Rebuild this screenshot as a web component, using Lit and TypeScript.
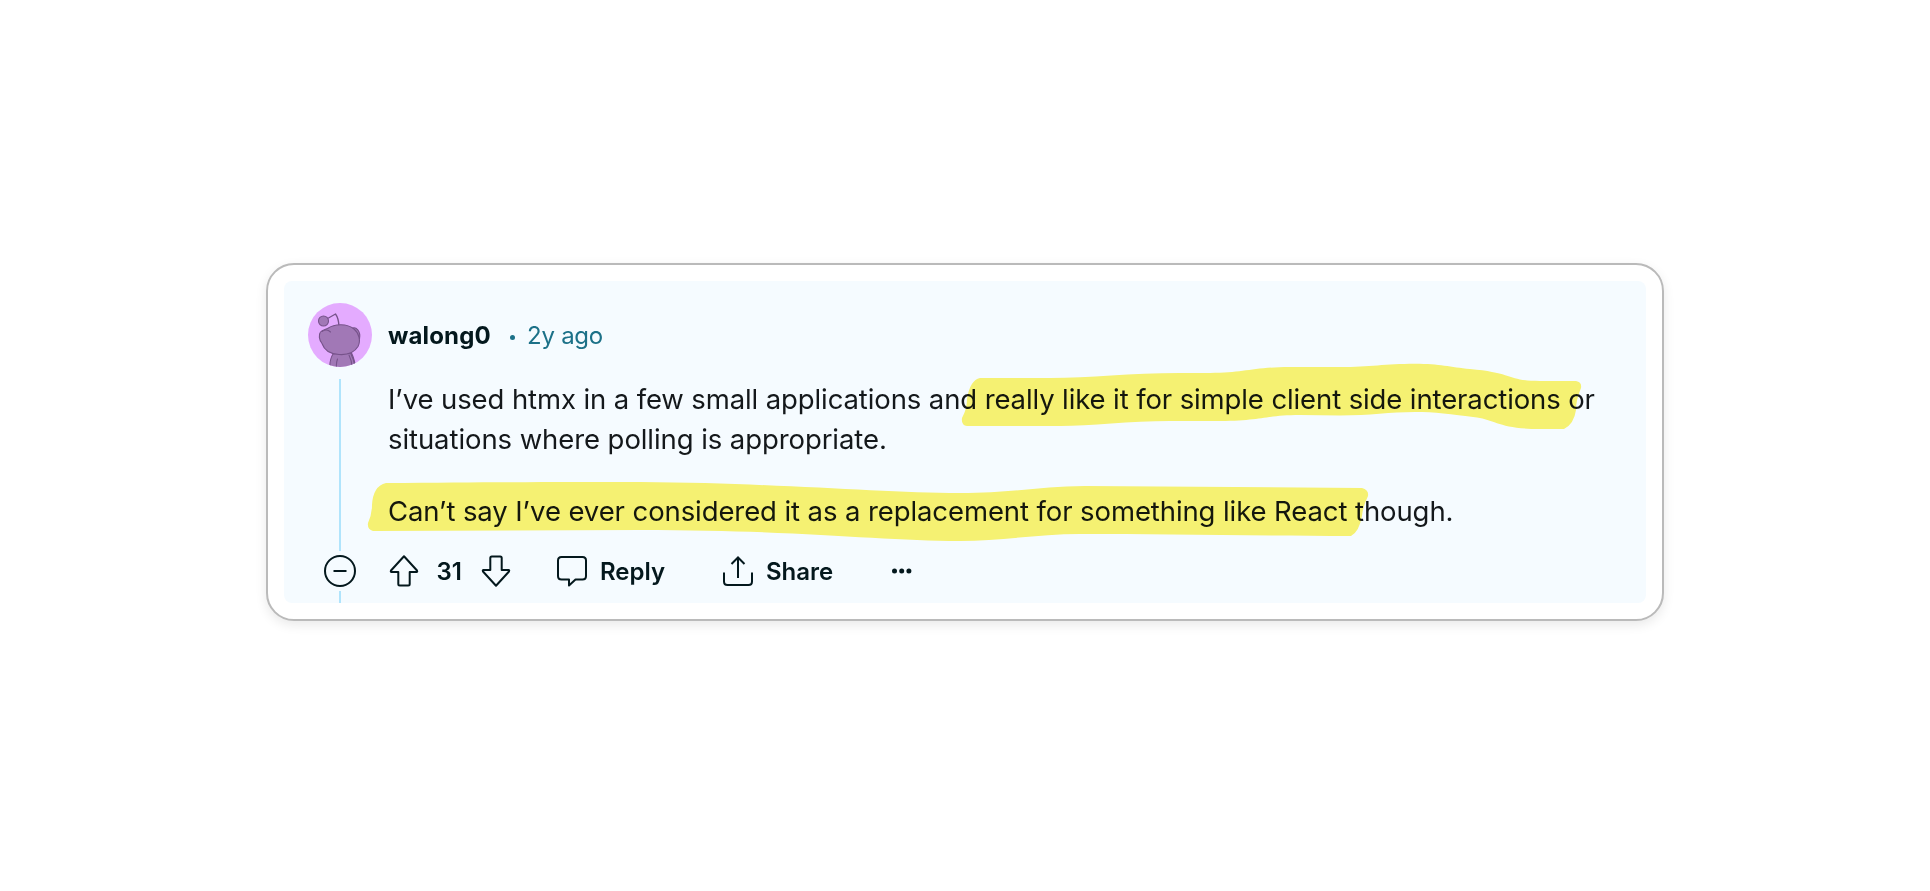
import { LitElement, html, css } from "lit";
import { customElement } from "lit/decorators.js";

@customElement("app-root")
export class AppRoot extends LitElement {
  static styles = css`
    :host {
      display: flex;
      justify-content: center;
      box-sizing: border-box;
      width: 100%;
      height: 891px;
      padding-top: 263px;
      background: #fff;
      font-family: Inter, "Liberation Sans", sans-serif;
      overflow: hidden;
    }
    svg { display: block; flex: none; }
    .card {
      box-sizing: border-box;
      width: 1398px;
      height: 358px;
      border: 2px solid #bababa;
      border-radius: 28px;
      padding: 16px;
      background: #fff;
      box-shadow: 0 4px 12px rgba(0, 0, 0, 0.09);
    }
    .comment {
      position: relative;
      box-sizing: border-box;
      height: 322px;
      border-radius: 8px;
      background: #f5fbff;
      padding: 22px 24px 0;
      display: grid;
      grid-template-columns: 64px 1fr;
      grid-template-rows: 64px 184px 40px 12px;
      column-gap: 16px;
    }
    .meta { display: flex; align-items: center; padding-top: 2px; font-size: 24px; line-height: 32px; white-space: pre; }
    .name { font-weight: 700; color: #04181d; width: 119px; letter-spacing: 0.15px; }
    .dot { width: 5px; height: 5px; border-radius: 50%; background: #1c7188; margin: 2px 12px 0 3px; }
    .age { color: #1c7188; letter-spacing: -0.25px; }
    .line { justify-self: center; width: 2px; background: #b0e4fc; }
    .long { margin: 12px 0 0; }
    .body { padding-top: 12px; font-size: 27.5px; line-height: 40px; color: #14181b; white-space: nowrap; }
    .body p { margin: 0 0 32px; }
    .body span { display: block; }
    .fold { display: flex; align-items: center; justify-content: center; }
    .actions { display: flex; align-items: center; font-size: 24px; line-height: 30px; font-weight: 600; color: #04181d; }
    .actions span { box-sizing: border-box; padding-top: 2px; }
    .count { width: 62px; padding-left: 17.5px; }
    .reply { width: 136px; padding-left: 13px; }
    .share { width: 138px; padding-left: 13px; }
    .marker { position: absolute; left: 0; top: 0; mix-blend-mode: multiply; pointer-events: none; }
    .l1 { letter-spacing: -0.113px; }
    .l2 { letter-spacing: -0.08px; }
    .l3 { letter-spacing: -0.096px; }
  `;

  private avatar() {
    return html`<svg width="64" height="64" viewBox="0 0 64 64">
      <defs><clipPath id="c"><circle cx="32" cy="32" r="32" /></clipPath></defs>
      <g clip-path="url(#c)">
        <rect width="64" height="64" fill="#e4abff" />
        <g fill="#a178b6" stroke="#76528a" stroke-width="1.1" stroke-linecap="round" stroke-linejoin="round">
          <path d="M20.5 15 27.5 11Q30.5 15 31 23" fill="none" stroke-width="1.3" />
          <circle cx="15.5" cy="18" r="5" />
          <path d="M43.5 25.5C48 23 53 28 51.5 36Z" />
          <path d="M25 51C22.500 55 21.500 60 22 66H48C47 60 46 55 43.500 50Z" />
          <path d="M29.500 56Q28 60 28.500 65M41 52Q44 58 44 65M43 51Q46 57 46.500 62" fill="none" />
          <path d="M19.500 25.500C27 20.500 39 20.500 46 26C51 30 53 38 50 43.500C46 50 38 52 31 51.500C22 51 16 46.500 14 40.500C11 37 10.500 31.500 12.500 29C14 27 17 26.500 19.500 25.500Z" />
          <path d="M14 28.500C17 26.500 20.500 27 22.500 29" fill="none" />
        </g>
      </g>
    </svg>`;
  }

  private arrow(down = false) {
    return html`<svg width="30" height="32" viewBox="0 0 30 32" fill="none" stroke="#04181d" stroke-width="2" stroke-linejoin="round">
      <path transform=${down ? "rotate(180 15 16)" : ""} d="M15 1.300 28 15.500Q28.600 17 27.500 17H20.700V29Q20.700 30.500 19.200 30.500H10.800Q9.300 30.500 9.300 29V17H2.500Q1.400 17 2 15.500Z" />
    </svg>`;
  }

  render() {
    return html`<article class="card">
      <section class="comment">
        ${this.avatar()}
        <header class="meta"><span class="name">walong0</span><i class="dot"></i><span class="age">2y ago</span></header>
        <div class="line long"></div>
        <div class="body">
          <p>
            <span class="l1">I’ve used htmx in a few small applications and really like it for simple client side interactions or</span>
            <span class="l2">situations where polling is appropriate.</span>
          </p>
          <p><span class="l3">Can’t say I’ve ever considered it as a replacement for something like React though.</span></p>
        </div>
        <div class="fold">
          <svg width="32" height="32" viewBox="0 0 32 32" fill="none" stroke="#04181d" stroke-width="2">
            <circle cx="16" cy="16" r="15" /><path d="M9.500 16H22.500" />
          </svg>
        </div>
        <div class="actions">
          <svg width="1" height="1"></svg>
          ${this.arrow()}
          <span class="count">31</span>
          ${this.arrow(true)}
          <svg width="76" height="32" viewBox="-1 0 76 32" fill="none" stroke="#04181d" stroke-width="2" stroke-linejoin="round">
            <path d="M49.500 2H70.500Q74 2 74 5.500V21Q74 24.500 70.500 24.500H63.500L57 30.500V24.500H49.500Q46 24.500 46 21V5.500Q46 2 49.500 2Z" />
          </svg>
          <span class="reply">Reply</span>
          <svg width="30" height="32" viewBox="0 0 30 32" fill="none" stroke="#04181d" stroke-width="2">
            <path d="M1 17.500V26.500Q1 30 4.500 30H25.500Q29 30 29 26.500V17.500M15 23V2.500M8.500 9 15 2.500 21.500 9" />
          </svg>
          <span class="share">Share</span>
          <svg width="22" height="8" viewBox="0 0 22 8" fill="#04181d">
            <circle cx="3.500" cy="4" r="2.500" /><circle cx="10.700" cy="4" r="2.500" /><circle cx="17.900" cy="4" r="2.500" />
          </svg>
        </div>
        <div class="line"></div>
        <svg class="marker" width="1362" height="322" viewBox="284 281 1362 322" fill="#fff572">
          <path d="M980 378H1050C1090 378 1130 373 1180 373H1210C1245 373 1250 367.300 1290 367H1340C1370 367 1385 363.700 1415 363.700C1440 363.700 1450 367 1470 369C1515 373 1507 381 1540 381H1576Q1582 382 1581 388Q1576 400 1576 410Q1574 424 1564 429H1540C1500 429 1495 420 1477 417.500C1450 414 1435 412 1415 412C1390 412 1370 415.500 1340 415.500L1300 415C1265 415 1262 421 1215 421H1170C1130 421 1090 426 1060 426H967Q961 425 962 418Q967 409 967 399Q970 380 980 378Z" />
          <path d="M386 483C500 482 560 482 640 482C780 483 880 493 960 493C1010 493 1040 486.500 1085 486L1362 488Q1369 490 1368 496Q1363 506 1362 516Q1359 532 1351 536C1260 536 1160 534 1080 534C1040 534 1000 541 960 541C880 541 800 530 640 530L373 531Q367 529 368 523Q372 514 372 505Q373 486 386 483Z" />
        </svg>
      </section>
    </article>`;
  }
}
